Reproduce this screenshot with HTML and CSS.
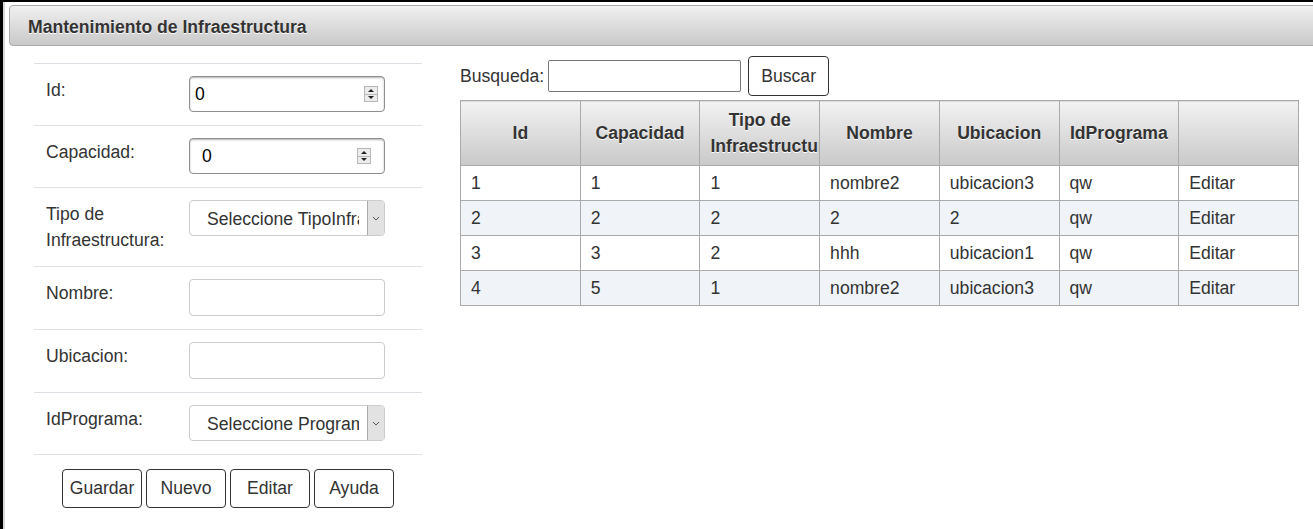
FILE: index.html
```html
<!DOCTYPE html>
<html lang="es">
<head>
<meta charset="utf-8">
<title>Mantenimiento de Infraestructura</title>
<link rel="stylesheet" href="styles.css">
</head>
<body>
<div class="page">
  <div class="panel-head">Mantenimiento de Infraestructura</div>
  <div class="content">
    <form class="form">
      <div class="row">
        <label class="lbl">Id:</label>
        <div class="numbox numbox-id">
          <input class="num-input" type="text" value="0">
          <span class="spin"><span class="up"></span><span class="down"></span></span>
        </div>
      </div>
      <div class="row">
        <label class="lbl">Capacidad:</label>
        <div class="numbox numbox-cap">
          <input class="num-input" type="text" value="0">
          <span class="spin"><span class="up"></span><span class="down"></span></span>
        </div>
      </div>
      <div class="row">
        <label class="lbl">Tipo de<br>Infraestructura:</label>
        <div class="selbox">
          <span class="sel-text">Seleccione TipoInfraestructura</span>
          <span class="sel-arrow"><svg width="8" height="5" viewBox="0 0 8 5"><path d="M1 1 L4 4 L7 1" fill="none" stroke="#555" stroke-width="1"/></svg></span>
        </div>
      </div>
      <div class="row">
        <label class="lbl">Nombre:</label>
        <input class="txt" type="text">
      </div>
      <div class="row">
        <label class="lbl">Ubicacion:</label>
        <input class="txt" type="text">
      </div>
      <div class="row">
        <label class="lbl">IdPrograma:</label>
        <div class="selbox">
          <span class="sel-text">Seleccione Programa</span>
          <span class="sel-arrow"><svg width="8" height="5" viewBox="0 0 8 5"><path d="M1 1 L4 4 L7 1" fill="none" stroke="#555" stroke-width="1"/></svg></span>
        </div>
      </div>
      <div class="buttons">
        <button type="button" class="btn">Guardar</button>
        <button type="button" class="btn">Nuevo</button>
        <button type="button" class="btn">Editar</button>
        <button type="button" class="btn">Ayuda</button>
      </div>
    </form>
    <div class="results">
      <div class="search">
        <label class="search-lbl">Busqueda:</label>
        <input class="search-input" type="text">
        <button type="button" class="btn btn-search">Buscar</button>
      </div>
      <table class="grid">
        <thead>
          <tr>
            <th>Id</th>
            <th>Capacidad</th>
            <th>Tipo de Infraestructura</th>
            <th>Nombre</th>
            <th>Ubicacion</th>
            <th>IdPrograma</th>
            <th></th>
          </tr>
        </thead>
        <tbody>
          <tr><td>1</td><td>1</td><td>1</td><td>nombre2</td><td>ubicacion3</td><td>qw</td><td>Editar</td></tr>
          <tr class="alt"><td>2</td><td>2</td><td>2</td><td>2</td><td>2</td><td>qw</td><td>Editar</td></tr>
          <tr><td>3</td><td>3</td><td>2</td><td>hhh</td><td>ubicacion1</td><td>qw</td><td>Editar</td></tr>
          <tr class="alt"><td>4</td><td>5</td><td>1</td><td>nombre2</td><td>ubicacion3</td><td>qw</td><td>Editar</td></tr>
        </tbody>
      </table>
    </div>
  </div>
</div>
</body>
</html>
```

FILE: styles.css
```css
* { box-sizing: border-box; }
html, body { margin: 0; padding: 0; }
body {
  font-family: "Liberation Sans", Arial, sans-serif;
  font-size: 17.6px;
  color: #333;
  background: #fff;
  overflow: hidden;
}
.page {
  min-height: 529px;
  border-top: 2px solid #000;
  border-left: 3px solid #000;
  box-shadow: inset 2px 0 0 #d8d8d8;
}
.panel-head {
  margin: 3px -20px 0 6px;
  height: 41px;
  border: 1px solid #aaa;
  border-radius: 4px 0 0 4px;
  background: linear-gradient(#f0f0f0, #c9c9c9);
  font-weight: bold;
  line-height: 39px;
  padding: 2px 0 0 18px;
  color: #333;
  text-shadow: 0 1px 0 #fff;
}
.content {
  display: flex;
  align-items: flex-start;
}
.form {
  margin: 17px 0 0 31px;
  width: 388px;
}
.row {
  display: grid;
  grid-template-columns: 155px 196px;
  border-top: 1px solid #dde0e4;
  padding: 12px 0 13px;
  align-items: start;
}
.row:nth-child(6) { border-bottom: 1px solid #dde0e4; }
.lbl {
  padding: 1px 0 0 12px;
  line-height: 26px;
}
.numbox {
  display: flex;
  align-items: center;
  height: 36px;
  border: 1px solid #8f8f8f;
  border-radius: 4px;
  box-shadow: inset 0 1px 2px rgba(0,0,0,.3);
  background: #fff;
}
.num-input {
  flex: 1;
  min-width: 0;
  border: 0;
  outline: 0;
  background: transparent;
  font: inherit;
  color: #000;
  padding: 0;
}
.numbox-id .num-input { padding-left: 5px; }
.numbox-id .spin { margin-right: 6px; }
.numbox-cap .num-input { padding-left: 12px; }
.numbox-cap .spin { margin-right: 13px; }
.spin {
  display: flex;
  flex-direction: column;
  width: 14px;
  height: 16px;
  border: 1px solid #b8b8b8;
  background: #ececec;
}
.spin .up, .spin .down {
  flex: 1;
  display: flex;
  align-items: center;
  justify-content: center;
}
.spin .up { border-bottom: 1px solid #b8b8b8; }
.spin .up::before {
  content: "";
  border-left: 3px solid transparent;
  border-right: 3px solid transparent;
  border-bottom: 3px solid #222;
}
.spin .down::before {
  content: "";
  border-left: 3px solid transparent;
  border-right: 3px solid transparent;
  border-top: 3px solid #222;
}
.selbox {
  display: flex;
  height: 36px;
  border: 1px solid #ccc;
  border-radius: 4px;
  background: #fff;
  overflow: hidden;
}
.sel-text {
  flex: 1;
  min-width: 0;
  overflow: hidden;
  white-space: nowrap;
  padding: 0 0 0 17px;
  margin-right: 8px;
  line-height: 36px;
  color: #333;
}
.sel-arrow {
  width: 17px;
  flex: none;
  display: flex;
  align-items: center;
  justify-content: center;
  background: #e2e2e2;
  border-left: 1px solid #aaa;
  margin: -1px 0;
  border-top: 1px solid #aaa;
  border-bottom: 1px solid #aaa;
}
.txt {
  height: 37px;
  border: 1px solid #ccc;
  border-radius: 4px;
  font: inherit;
  padding: 0 12px;
  outline: 0;
}
.buttons {
  display: flex;
  justify-content: center;
  gap: 4px;
  padding-top: 14px;
}
.btn {
  width: 80px;
  height: 39px;
  padding: 0;
  border: 1px solid #333;
  border-radius: 4px;
  background: #fff;
  font: inherit;
  color: #333;
  white-space: nowrap;
}
.results {
  margin-left: 38px;
  margin-top: 10px;
  width: 839px;
}
.search {
  display: flex;
  align-items: center;
  height: 40px;
}
.search-lbl { margin-right: 4px; }
.search-input {
  width: 193px;
  height: 32px;
  border: 1px solid #767676;
  border-radius: 2px;
  font: inherit;
  outline: 0;
}
.btn-search {
  width: 81px;
  height: 40px;
  margin-left: 7px;
}
.grid {
  margin-top: 4px;
  width: 839px;
  border-collapse: collapse;
  table-layout: fixed;
  border: 1px solid #aaa;
}
.grid th {
  height: 64px;
  padding: 6px 10px;
  border: 1px solid #aaa;
  background: linear-gradient(#f2f2f2, #c9c9c9);
  font-weight: bold;
  line-height: 26px;
  text-align: center;
  overflow: hidden;
  text-shadow: 0 1px 0 #fff;
  color: #333;
}
.grid td {
  height: 35px;
  padding: 0 10px;
  border: 1px solid #aaa;
  line-height: 22px;
  white-space: nowrap;
  overflow: hidden;
}
.grid tr.alt td { background: #f0f4f9; }
```
